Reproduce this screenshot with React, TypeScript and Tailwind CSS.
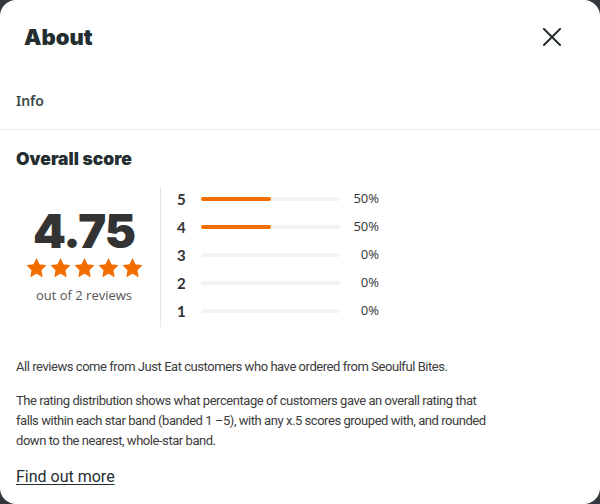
const rows = [
    { star: 5, pct: 50 },
    { star: 4, pct: 50 },
    { star: 3, pct: 0 },
    { star: 2, pct: 0 },
    { star: 1, pct: 0 },
]

function Star() {
    return (
        <svg viewBox="0 0 24 23" className="h-[20px] w-[21px]" fill="#f36d00">
            <path d="M12 0l3.5 7.3 8 1.1-5.8 5.6 1.4 8L12 18.2 4.9 22l1.4-8L.5 8.4l8-1.1z" />
        </svg>
    )
}

export default function App() {
    return (
        <div className="h-[504px] w-[600px] bg-[#33373f]">
            <div className="flex h-full flex-col rounded-2xl bg-white text-[#242e30] font-['Inter',sans-serif]">
                {/* Header */}
                <div className="flex items-center justify-between pl-6 pr-[39px] pt-[22px]">
                    <h2 className="text-[22px] font-black leading-[30px]">About</h2>
                    <button className="text-[#242e30]">
                        <svg viewBox="0 0 18 18" className="h-[18px] w-[18px]" stroke="currentColor" strokeWidth="2" strokeLinecap="square">
                            <path d="M1 1l16 16M17 1L1 17" />
                        </svg>
                    </button>
                </div>

                <div className="px-4 pt-[38px] pb-[18px] text-[14px] font-semibold text-[#3c4a4c] font-['Noto_Sans',sans-serif]">
                    Info
                </div>
                <div className="border-t border-[#ececec]" />

                {/* Overall score */}
                <div className="px-4 pt-[17px]">
                    <h3 className="text-[17.5px] font-black leading-[24px]">Overall score</h3>

                    <div className="mt-[16px] flex">
                        <div className="mr-[8px] flex w-[136px] flex-col items-center pt-[18px]">
                            <div className="text-[47px] font-black leading-[52px] tracking-[-1px] text-[#333]">4.75</div>
                            <div className="mt-[1px] flex gap-[3px]">
                                <Star />
                                <Star />
                                <Star />
                                <Star />
                                <Star />
                            </div>
                            <div className="mt-[8px] text-[13px] text-[#555] font-['Open_Sans',sans-serif]">out of 2 reviews</div>
                        </div>

                        <div className="flex flex-col gap-[8px] border-l border-[#e6e6e6] pl-[16px] pt-[2px] pb-[6px]">
                            {rows.map((r) => (
                                <div key={r.star} className="flex h-[20px] items-center">
                                    <span className="w-[24px] text-[15px] font-bold text-[#333] font-['Lato',sans-serif]">{r.star}</span>
                                    <div className="h-[4px] w-[139px] rounded-full bg-[#f5f3f1]">
                                        <div className="h-full rounded-full bg-[#f36d00]" style={{ width: `${r.pct}%` }} />
                                    </div>
                                    <span className="w-[39px] text-right text-[13px] text-[#333] font-['Open_Sans',sans-serif]">{r.pct}%</span>
                                </div>
                            ))}
                        </div>
                    </div>
                </div>

                {/* Notes */}
                <div className="px-4 pt-[30px] text-[13px] leading-[20px] tracking-[-0.45px] text-[#3c3c3c] font-['Roboto',sans-serif]">
                    <p>All reviews come from Just Eat customers who have ordered from Seoulful Bites.</p>
                    <p className="mt-[14px] max-w-[484px]">
                        The rating distribution shows what percentage of customers gave an overall rating that falls within each star band (banded 1 –5), with any x.5 scores grouped with, and rounded down to the nearest, whole-star band.
                    </p>
                    <a href="#" className="mt-[16px] inline-block text-[16px] tracking-normal text-[#242e30] underline underline-offset-2">
                        Find out more
                    </a>
                </div>
            </div>
        </div>
    )
}
